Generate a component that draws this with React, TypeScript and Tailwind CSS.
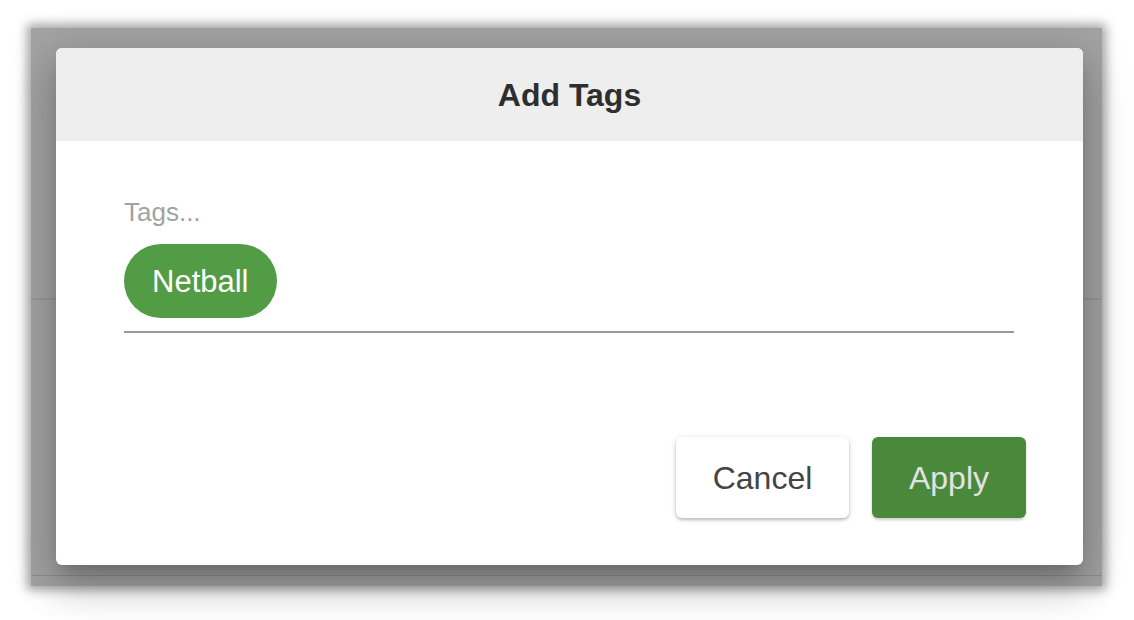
import React from 'react';

const font = { fontFamily: 'Arial, "Liberation Sans", sans-serif' };

function TagChip({ label }: { label: string }) {
  return (
    <span className="inline-flex h-[74px] items-center rounded-full bg-[#539c46] px-[28px] text-[31px] leading-none text-white">
      {label}
    </span>
  );
}

export default function App() {
  return (
    <div className="h-[620px] w-[1134px] overflow-hidden bg-white pl-[31px] pt-[28px]" style={font}>
      {/* dimmed page behind the dialog */}
      <div className="relative flex h-[558px] w-[1071px] flex-col bg-[#a3a3a3] shadow-[0_0_10px_4px_rgba(0,0,0,0.35)]">
        <div className="mt-[270px] h-[2px] bg-[#989898]" />
        <div className="mt-auto mb-[10px] h-[1px] bg-[#8e8e8e]" />

        {/* dialog */}
        <div className="absolute left-[25px] top-[20px] flex h-[517px] w-[1027px] flex-col overflow-hidden rounded-[6px] bg-white shadow-[0_11px_15px_-7px_rgba(0,0,0,0.2),0_24px_38px_3px_rgba(0,0,0,0.14),0_9px_46px_8px_rgba(0,0,0,0.12)]">
          <div className="flex h-[93px] items-center justify-center bg-[#eeeeee]">
            <h2 className="text-[32px] font-bold leading-none text-[#2e2e2e]">Add Tags</h2>
          </div>

          <div className="flex flex-1 flex-col pl-[68px] pr-[69px] pt-[56px]">
            <div className="text-[26px] leading-[30px] text-[#a2a2a2]">Tags...</div>
            <div className="mt-[17px] flex gap-2 border-b-2 border-[#999999] pb-[13px]">
              <TagChip label="Netball" />
            </div>

            <div className="-mr-[12px] mt-auto flex justify-end gap-[23px] pb-[47px]">
              <button className="h-[81px] w-[173px] rounded-[6px] bg-white text-[32px] text-[#444444] shadow-[0_2px_3px_rgba(0,0,0,0.2),0_1px_6px_rgba(0,0,0,0.12)]">
                Cancel
              </button>
              <button className="h-[81px] w-[154px] rounded-[6px] bg-[#4a893c] text-[32px] text-[#e2e2e2] shadow-[0_2px_3px_rgba(0,0,0,0.2)]">
                Apply
              </button>
            </div>
          </div>
        </div>
      </div>
    </div>
  );
}
